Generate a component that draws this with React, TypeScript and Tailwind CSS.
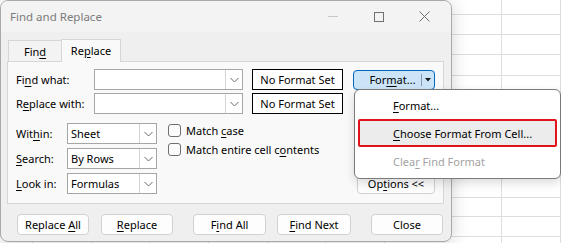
import React from 'react';

const rowHeights = [15, 20, 20, 21, 20, 21, 20, 20, 21, 20, 19, 20, 20];
const colWidths = [36, 64, 64, 64, 64, 64, 64, 64, 64, 64];

function Chevron() {
  return (
    <svg width="9" height="6" viewBox="0 0 9 6" fill="none">
      <polyline points="0.5,1 4.5,5 8.5,1" stroke="#6b6b6b" strokeWidth="1" />
    </svg>
  );
}

function Combo({ width, value }: { width: string; value?: string }) {
  return (
    <div className={`flex h-[21px] ${width} border border-[#a6a6a6] bg-white`}>
      <div className="flex flex-1 items-center pl-[3px] text-black">{value}</div>
      <div className="flex w-[17px] items-center justify-center border-l border-[#d4d4d4]">
        <Chevron />
      </div>
    </div>
  );
}

function Btn({ width, children }: { width: string; children: React.ReactNode }) {
  return (
    <div
      className={`flex h-[21px] ${width} items-center justify-center rounded-[4px] border border-[#d1d1d1] bg-[#fdfdfd] text-black`}
    >
      <span>{children}</span>
    </div>
  );
}

function Checkbox({ children }: { children: React.ReactNode }) {
  return (
    <div className="flex h-[13px] items-center gap-[5px]">
      <div className="h-[13px] w-[13px] rounded-[3px] border border-[#6f6f6f] bg-[#fbfbfb]" />
      <span className="text-black">{children}</span>
    </div>
  );
}

const U = ({ children }: { children: React.ReactNode }) => (
  <span className="underline underline-offset-[2px]">{children}</span>
);

export default function App() {
  return (
    <div className="relative h-[243px] w-[561px] overflow-hidden bg-white font-['Segoe_UI','Noto_Sans',sans-serif] text-[11px] leading-none">
      {/* spreadsheet behind */}
      <div className="flex flex-col">
        {rowHeights.map((h, r) => (
          <div key={r} className="flex" style={{ height: h }}>
            {colWidths.map((w, c) => (
              <div key={c} className="border-r border-b border-[#dedede]" style={{ width: w }} />
            ))}
          </div>
        ))}
      </div>

      {/* dialog window */}
      <div className="absolute left-0 top-0 h-[242px] w-[452px] overflow-hidden rounded-[8px] border border-[#a9a9a9] bg-[#efefef] shadow-[0_2px_18px_rgba(0,0,0,0.18)]">
        {/* title bar */}
        <div className="flex h-[31px] items-center bg-[#f3f3f3] pl-[9px]">
          <span className="text-[11.5px] text-[#7b7b7b]">Find and Replace</span>
          <div className="ml-auto flex h-full items-center pr-[3px]">
            <div className="flex w-[46px] items-center justify-center">
              <div className="h-px w-[10px] bg-[#c8c8c8]" />
            </div>
            <div className="flex w-[46px] items-center justify-center">
              <div className="h-[10px] w-[10px] border border-[#707070]" />
            </div>
            <div className="flex w-[46px] items-center justify-center pr-[2px]">
              <svg width="11" height="11" viewBox="0 0 11 11">
                <path d="M0.5 0.5 L10.5 10.5 M10.5 0.5 L0.5 10.5" stroke="#707070" strokeWidth="1" />
              </svg>
            </div>
          </div>
        </div>

        <div className="px-[6px]">
          {/* tabs */}
          <div className="flex h-[29px] items-end pl-[1px]">
            <div className="flex h-[21px] w-[53px] items-center justify-center border-t border-l border-[#d6d6d6] bg-[#f3f3f3] text-black">
              <span>
                Fin<U>d</U>
              </span>
            </div>
            <div className="relative z-10 -mb-px flex h-[23px] w-[60px] items-center justify-center border-x border-t border-[#d6d6d6] bg-[#f9f9f9] pb-[2px] text-black">
              <span>
                Re<U>p</U>lace
              </span>
            </div>
          </div>

          {/* tab page */}
          <div className="flex h-[143px] w-[437px] flex-col border border-[#d6d6d6] bg-[#f9f9f9] px-[8px] pt-[7px]">
            <div className="flex h-[21px] items-center">
              <span className="w-[78px] text-black">
                Fi<U>n</U>d what:
              </span>
              <Combo width="w-[149px]" />
              <div className="ml-[9px] flex h-[21px] w-[91px] items-center justify-center border border-black bg-white text-black">
                No Format Set
              </div>
              <div className="ml-[10px] flex h-[20px] w-[82px] items-center rounded-[4px] border border-[#0067c0] bg-[#cce4f7] text-black">
                <span className="flex-1 pl-[10px] text-center">
                  For<U>m</U>at...
                </span>
                <div className="h-[12px] w-px bg-[#8a9aa8]" />
                <svg className="mx-[3px]" width="6" height="4" viewBox="0 0 6 4">
                  <path d="M0 0 H6 L3 3.5 Z" fill="#1a1a1a" />
                </svg>
              </div>
            </div>

            <div className="mt-[3px] flex h-[21px] items-center">
              <span className="w-[78px] text-black">
                R<U>e</U>place with:
              </span>
              <Combo width="w-[149px]" />
              <div className="ml-[9px] flex h-[21px] w-[91px] items-center justify-center border border-black bg-white text-black">
                No Format Set
              </div>
            </div>

            <div className="mt-[9px] flex">
              <div className="flex flex-col gap-[4px]">
                <div className="flex h-[21px] items-center">
                  <span className="w-[51px] text-black">
                    Wit<U>h</U>in:
                  </span>
                  <Combo width="w-[90px]" value="Sheet" />
                </div>
                <div className="flex h-[21px] items-center">
                  <span className="w-[51px] text-black">
                    <U>S</U>earch:
                  </span>
                  <Combo width="w-[90px]" value="By Rows" />
                </div>
                <div className="flex h-[21px] items-center">
                  <span className="w-[51px] text-black">
                    <U>L</U>ook in:
                  </span>
                  <Combo width="w-[90px]" value="Formulas" />
                </div>
              </div>

              <div className="ml-[11px] flex flex-1 flex-col gap-[6px] pt-[1px]">
                <Checkbox>
                  Match <U>c</U>ase
                </Checkbox>
                <Checkbox>
                  Match entire cell c<U>o</U>ntents
                </Checkbox>
              </div>

              <div className="flex flex-col justify-end">
                <Btn width="w-[78px]">
                  Op<U>t</U>ions &lt;&lt;
                </Btn>
              </div>
            </div>
          </div>

          {/* bottom buttons */}
          <div className="mt-[10px] flex pl-[10px]">
            <Btn width="w-[72px]">
              Replace <U>A</U>ll
            </Btn>
            <div className="ml-[12px]">
              <Btn width="w-[72px]">
                <U>R</U>eplace
              </Btn>
            </div>
            <div className="ml-[20px]">
              <Btn width="w-[73px]">
                F<U>i</U>nd All
              </Btn>
            </div>
            <div className="ml-[11px]">
              <Btn width="w-[74px]">
                <U>F</U>ind Next
              </Btn>
            </div>
            <div className="ml-[20px]">
              <Btn width="w-[72px]">Close</Btn>
            </div>
          </div>
        </div>
      </div>

      {/* dropdown menu */}
      <div className="absolute left-[354px] top-[89px] flex h-[90px] w-[207px] flex-col rounded-[6px] border border-[#7a7a7a] bg-white px-[3px] py-[2px] shadow-[0_4px_10px_rgba(0,0,0,0.14)]">
        <div className="flex h-[27px] items-center pl-[35px] text-black">
          <span>
            <U>F</U>ormat...
          </span>
        </div>
        <div className="flex h-[28px] items-center rounded-[2px] border-2 border-[#e0131c] bg-[#ececec] pl-[33px] text-black">
          <span>
            <U>C</U>hoose Format From Cell...
          </span>
        </div>
        <div className="flex flex-1 items-center pl-[35px] text-[#a3a3a3]">
          <span>
            Clea<U>r</U> Find Format
          </span>
        </div>
      </div>
    </div>
  );
}
